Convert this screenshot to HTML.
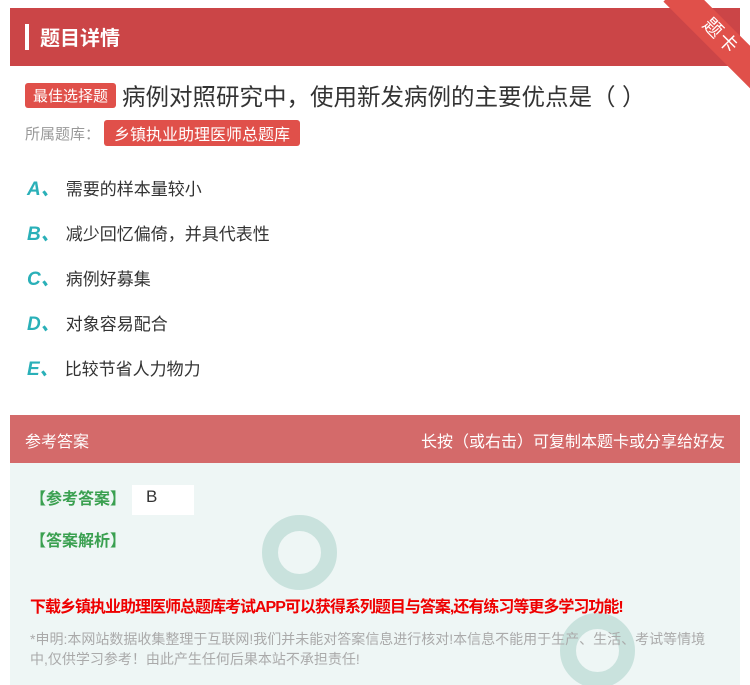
<!DOCTYPE html>
<html><head><meta charset="utf-8"><style>
*{margin:0;padding:0;box-sizing:border-box}
body{width:750px;height:685px;background:#fff;font-family:"Liberation Sans","Noto Sans CJK SC",sans-serif;position:relative;overflow:hidden}
.hdr{position:absolute;left:10px;top:8px;width:730px;height:58px;background:#cb4547}
.hdr .bar{position:absolute;left:15px;top:16px;width:4px;height:26px;background:#fff}
.hdr .t{position:absolute;left:30px;top:14px;color:#fff;font-size:20px;font-weight:bold}
.rib{position:absolute;left:655px;top:22px;width:130px;height:30px;background:#e0504a;transform:rotate(45deg);color:#fff;font-size:19px;text-align:center;line-height:30px;letter-spacing:2px}
.q{position:absolute;left:25px;top:78px;font-size:23.5px;color:#333;display:flex;align-items:center}
.tag{background:#e0504a;color:#fff;font-size:15px;padding:2px 8px;border-radius:3px;margin-right:6px}
.lib{position:absolute;left:25px;top:120px;font-size:15px;color:#999;display:flex;align-items:center}
.lib .tag{margin-left:4px;padding:1px 10px;font-size:16px}
.opt{position:absolute;left:27px;font-size:17px;color:#333}
.opt b{color:#2ab0b8;font-style:italic;font-size:19px;margin-right:6px}
.ans{position:absolute;left:10px;top:415px;width:730px;height:48px;background:#d46a6a;color:#fff;font-size:16px}
.ans .l{position:absolute;left:15px;top:13px}.ans .r{position:absolute;right:15px;top:13px}
.box{position:absolute;left:10px;top:463px;width:730px;height:222px;background:#eef6f5;overflow:hidden}
.g{position:absolute;color:#3aa050;font-size:16px;font-weight:bold}
.red{position:absolute;left:20px;top:130px;color:#e00;font-size:16px;font-weight:bold;letter-spacing:-1px}
.note{position:absolute;left:20px;top:166px;width:690px;color:#aaa;font-size:14px;line-height:20px}
.logo{position:absolute;width:75px;height:75px;border-radius:50%;border:16px solid #c9e2dd}
</style></head><body>
<div class="hdr"><div class="bar"></div><div class="t">题目详情</div></div>
<div class="rib">题卡</div>
<div class="q"><span class="tag">最佳选择题</span>病例对照研究中，使用新发病例的主要优点是（ ）</div>
<div class="lib">所属题库：<span class="tag">乡镇执业助理医师总题库</span></div>
<div class="opt" style="top:174px"><b>A、</b>需要的样本量较小</div>
<div class="opt" style="top:219px"><b>B、</b>减少回忆偏倚，并具代表性</div>
<div class="opt" style="top:264px"><b>C、</b>病例好募集</div>
<div class="opt" style="top:309px"><b>D、</b>对象容易配合</div>
<div class="opt" style="top:354px"><b>E、</b>比较节省人力物力</div>
<div class="ans"><span class="l">参考答案</span><span class="r">长按（或右击）可复制本题卡或分享给好友</span></div>
<div class="box">
<div class="logo" style="left:252px;top:52px"></div>
<div class="logo" style="left:550px;top:150px"></div>
<div class="g" style="left:20px;top:22px">【参考答案】</div>
<div style="position:absolute;left:122px;top:22px;width:62px;height:30px;background:#fff;color:#333;font-size:17px;padding:2px 14px">B</div>
<div class="g" style="left:20px;top:64px">【答案解析】</div>
<div class="red">下载乡镇执业助理医师总题库考试APP可以获得系列题目与答案,还有练习等更多学习功能!</div>
<div class="note">*申明:本网站数据收集整理于互联网!我们并未能对答案信息进行核对!本信息不能用于生产、生活、考试等情境中,仅供学习参考！由此产生任何后果本站不承担责任!</div>
</div>
</body></html>
